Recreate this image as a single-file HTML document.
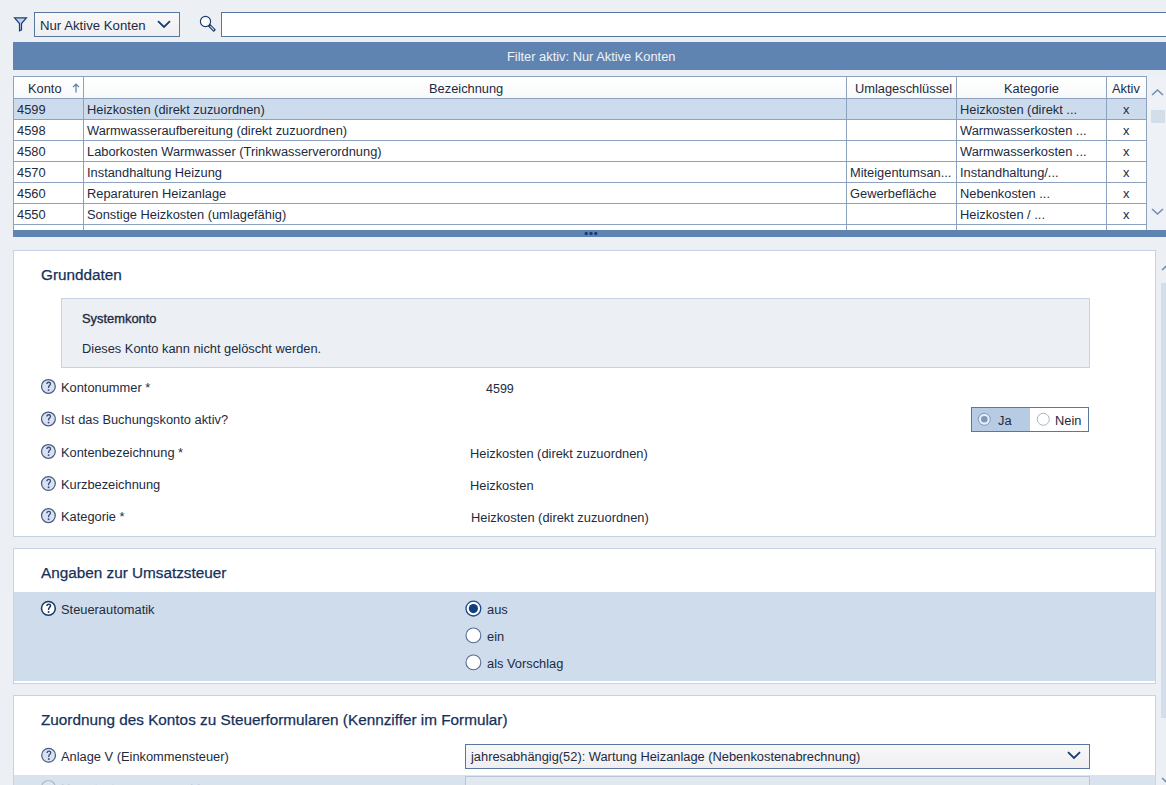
<!DOCTYPE html>
<html><head><meta charset="utf-8">
<style>
*{box-sizing:border-box;margin:0;padding:0}
html,body{width:1166px;height:785px;overflow:hidden;background:#ECEFF3;font-family:"Liberation Sans",sans-serif;color:#1D2B40;font-size:12.85px}
.a{position:absolute}
.t{position:absolute;white-space:nowrap;line-height:1}
/* top toolbar */
#combo{left:34px;top:12px;width:146px;height:25px;border:1px solid #58769E;background:linear-gradient(#F8F8F9,#EFEFF1)}
#search{left:221px;top:12px;width:960px;height:25px;border:1px solid #58769E;background:#fff}
#bar{left:13px;top:42px;width:1153px;height:28px;background:#5F84B2}
/* grid */
#grid{left:13px;top:76px;width:1134px;height:154px;background:#fff;border-top:1px solid #8DA2BF;border-left:1px solid #8DA2BF;overflow:hidden}
.hl{position:absolute;left:0;width:1134px;height:1px;background:#8DA2BF}
.vl{position:absolute;top:0;width:1px;height:154px;background:#8DA2BF}
#sel{position:absolute;left:0;top:22px;width:1133px;height:21px;background:#CDDCEC}
#hdr{position:absolute;left:0;top:0;width:1133px;height:22px;background:linear-gradient(#FFFFFF,#F7F8FA)}
#split{left:13px;top:230px;width:1153px;height:7px;background:#5F84B2}
#vs{left:1147px;top:76px;width:19px;height:154px;background:#EEF1F5}
/* panels */
.panel{position:absolute;left:13px;width:1143px;background:#fff;border:1px solid #C6D3E2}
.h{font-size:15.3px;color:#16305A;-webkit-text-stroke:0.25px #16305A}
.q{position:absolute;width:15px;height:15px}
.hi{position:absolute;left:1px;background:#CEDCEB}
</style></head><body>

<!-- toolbar -->
<svg class="a" style="left:13px;top:16px" width="15" height="16" viewBox="0 0 15 16">
  <path d="M1.6 1.9 H13.4 L8.5 7.5 V13.9 L6.5 14.8 V7.5 Z" fill="#C3D2EC" stroke="#1B3F74" stroke-width="1.2" stroke-linejoin="miter"/>
</svg>
<div id="combo" class="a"></div>
<div class="t" style="left:40px;top:19px;font-size:13.2px">Nur Aktive Konten</div>
<svg class="a" style="left:157px;top:20px" width="14" height="9" viewBox="0 0 14 9"><path d="M1 1.2 L7 7 L13 1.2" fill="none" stroke="#173C72" stroke-width="1.8"/></svg>
<svg class="a" style="left:199px;top:15px" width="18" height="18" viewBox="0 0 18 18">
  <circle cx="6.5" cy="6.5" r="5.1" fill="#fff" stroke="#1B3A66" stroke-width="1.15"/>
  <path d="M10.1 10.1 L15.8 15.8" stroke="#1B3A66" stroke-width="3.2"/>
  <path d="M11.2 11.2 L15 15" stroke="#C9D7EA" stroke-width="1.1"/>
</svg>
<div id="search" class="a"></div>
<div id="bar" class="a"></div>
<div class="t" style="left:507px;top:51px;color:#EEF3F9">Filter aktiv: Nur Aktive Konten</div>

<!-- grid -->
<div id="grid" class="a">
  <div id="hdr"></div>
  <div id="sel"></div>
  <div class="hl" style="top:21px"></div>
  <div class="hl" style="top:42px"></div>
  <div class="hl" style="top:63px"></div>
  <div class="hl" style="top:84px"></div>
  <div class="hl" style="top:105px"></div>
  <div class="hl" style="top:126px"></div>
  <div class="hl" style="top:147px"></div>
  <div class="vl" style="left:69px"></div>
  <div class="vl" style="left:832px"></div>
  <div class="vl" style="left:942px"></div>
  <div class="vl" style="left:1092px"></div>
  <div class="vl" style="left:1132px"></div>
</div>
<div id="vs" class="a"></div>
<svg class="a" style="left:1151px;top:88px" width="13" height="9" viewBox="0 0 13 9"><path d="M1 7 L6.5 2 L12 7" fill="none" stroke="#6F8DB6" stroke-width="1.5"/></svg>
<div class="a" style="left:1151px;top:110px;width:14px;height:13px;background:#D3DEEB"></div>
<svg class="a" style="left:1151px;top:207px" width="13" height="9" viewBox="0 0 13 9"><path d="M1 2 L6.5 7 L12 2" fill="none" stroke="#6F8DB6" stroke-width="1.5"/></svg>

<!-- header texts -->
<div class="t" style="left:28px;top:83px">Konto</div>
<svg class="a" style="left:72px;top:83px" width="8" height="10" viewBox="0 0 8 10"><path d="M4 9.5 V1.2 M1 4.2 L4 1.2 L7 4.2" fill="none" stroke="#5C7AA5" stroke-width="1.2"/></svg>
<div class="t" style="left:429px;top:83px">Bezeichnung</div>
<div class="t" style="left:855px;top:83px">Umlageschlüssel</div>
<div class="t" style="left:1004px;top:83px">Kategorie</div>
<div class="t" style="left:1112px;top:83px">Aktiv</div>

<!-- rows -->
<div id="rows">
<div class="t" style="left:17px;top:104px">4599</div><div class="t" style="left:87px;top:104px">Heizkosten (direkt zuzuordnen)</div><div class="t" style="left:960px;top:104px">Heizkosten (direkt ...</div><div class="t" style="left:1123px;top:104px">x</div>
<div class="t" style="left:17px;top:125px">4598</div><div class="t" style="left:87px;top:125px">Warmwasseraufbereitung (direkt zuzuordnen)</div><div class="t" style="left:960px;top:125px">Warmwasserkosten ...</div><div class="t" style="left:1123px;top:125px">x</div>
<div class="t" style="left:17px;top:146px">4580</div><div class="t" style="left:87px;top:146px">Laborkosten Warmwasser (Trinkwasserverordnung)</div><div class="t" style="left:960px;top:146px">Warmwasserkosten ...</div><div class="t" style="left:1123px;top:146px">x</div>
<div class="t" style="left:17px;top:167px">4570</div><div class="t" style="left:87px;top:167px">Instandhaltung Heizung</div><div class="t" style="left:850px;top:167px">Miteigentumsan...</div><div class="t" style="left:960px;top:167px">Instandhaltung/...</div><div class="t" style="left:1123px;top:167px">x</div>
<div class="t" style="left:17px;top:188px">4560</div><div class="t" style="left:87px;top:188px">Reparaturen Heizanlage</div><div class="t" style="left:850px;top:188px">Gewerbefläche</div><div class="t" style="left:960px;top:188px">Nebenkosten ...</div><div class="t" style="left:1123px;top:188px">x</div>
<div class="t" style="left:17px;top:209px">4550</div><div class="t" style="left:87px;top:209px">Sonstige Heizkosten (umlagefähig)</div><div class="t" style="left:960px;top:209px">Heizkosten / ...</div><div class="t" style="left:1123px;top:209px">x</div>
</div>
<div id="split" class="a"></div>
<svg class="a" style="left:584px;top:231px" width="14" height="5" viewBox="0 0 14 5"><circle cx="2.2" cy="2.5" r="1.7" fill="#113F7E"/><circle cx="7" cy="2.5" r="1.7" fill="#113F7E"/><circle cx="11.8" cy="2.5" r="1.7" fill="#113F7E"/></svg>

<!-- right scrollbar of details -->
<svg class="a" style="left:1161px;top:263px" width="5" height="9" viewBox="0 0 5 9"><path d="M1 7 L6.5 2 L12 7" fill="none" stroke="#6F8DB6" stroke-width="1.5"/></svg><svg class="a" style="left:1161px;top:776px" width="5" height="9" viewBox="0 0 5 9"><path d="M1 2 L6.5 7 L12 2" fill="none" stroke="#6F8DB6" stroke-width="1.5"/></svg>
<div class="a" style="left:1161px;top:283px;width:5px;height:435px;background:#D3DEEB"></div>

<!-- Grunddaten panel -->
<div class="panel" style="top:250px;height:287px"></div>
<div class="t h" style="left:41px;top:267px">Grunddaten</div>
<div class="a" style="left:61px;top:298px;width:1029px;height:70px;background:#ECF0F5;border:1px solid #C6D3E2"></div>
<div class="t" style="left:82px;top:313px;font-size:12.9px;-webkit-text-stroke:0.35px #1D2B40">Systemkonto</div>
<div class="t" style="left:82px;top:343px">Dieses Konto kann nicht gelöscht werden.</div>

<div class="t" style="left:61px;top:382px">Kontonummer *</div>
<div class="t" style="left:486px;top:383px;font-size:12.5px">4599</div>
<div class="t" style="left:61px;top:414px">Ist das Buchungskonto aktiv?</div>
<div class="t" style="left:61px;top:447px">Kontenbezeichnung *</div>
<div class="t" style="left:470px;top:448px">Heizkosten (direkt zuzuordnen)</div>
<div class="t" style="left:61px;top:479px">Kurzbezeichnung</div>
<div class="t" style="left:470px;top:480px">Heizkosten</div>
<div class="t" style="left:61px;top:511px">Kategorie *</div>
<div class="t" style="left:471px;top:512px">Heizkosten (direkt zuzuordnen)</div>

<!-- Ja/Nein -->
<div class="a" style="left:971px;top:407px;width:118px;height:25px;border:1px solid #5A779F;background:#fff"></div>
<div class="a" style="left:972px;top:408px;width:58px;height:23px;background:#B7CBE5"></div>
<svg class="a" style="left:977px;top:412px" width="15" height="15" viewBox="0 0 15 15"><circle cx="7.3" cy="7.3" r="6" fill="#E4ECF6" stroke="#7F97B8" stroke-width="1"/><circle cx="7.3" cy="7.3" r="3.3" fill="#7F97B8"/></svg>
<div class="t" style="left:998px;top:415px">Ja</div>
<svg class="a" style="left:1036px;top:412px" width="15" height="15" viewBox="0 0 15 15"><circle cx="7.3" cy="7.3" r="6" fill="#fff" stroke="#A9B6C8" stroke-width="1"/></svg>
<div class="t" style="left:1055px;top:415px">Nein</div>

<!-- Umsatzsteuer panel -->
<div class="panel" style="top:548px;height:136px"></div>
<div class="hi" style="left:14px;top:592px;width:1141px;height:89px"></div>
<div class="t h" style="left:41px;top:565px">Angaben zur Umsatzsteuer</div>
<div class="t" style="left:61px;top:604px">Steuerautomatik</div>
<svg class="a" style="left:465px;top:600px" width="17" height="17" viewBox="0 0 17 17"><circle cx="8.4" cy="8.6" r="7.4" fill="#fff" stroke="#1D4A87" stroke-width="1.3"/><circle cx="8.4" cy="8.6" r="4.6" fill="#0F3F80"/></svg>
<div class="t" style="left:487px;top:604px">aus</div>
<svg class="a" style="left:465px;top:627px" width="17" height="17" viewBox="0 0 17 17"><circle cx="8.4" cy="8.4" r="7.4" fill="#fff" stroke="#586F91" stroke-width="1.1"/></svg>
<div class="t" style="left:487px;top:631px">ein</div>
<svg class="a" style="left:465px;top:654px" width="17" height="17" viewBox="0 0 17 17"><circle cx="8.4" cy="8.4" r="7.4" fill="#fff" stroke="#586F91" stroke-width="1.1"/></svg>
<div class="t" style="left:487px;top:658px">als Vorschlag</div>

<!-- Zuordnung panel -->
<div class="panel" style="top:695px;height:100px"></div>
<div class="t h" style="left:41px;top:712px">Zuordnung des Kontos zu Steuerformularen (Kennziffer im Formular)</div>
<div class="t" style="left:61px;top:751px">Anlage V (Einkommensteuer)</div>
<div class="a" style="left:465px;top:744px;width:625px;height:25px;border:1px solid #58769E;background:linear-gradient(#F8F8F9,#EFEFF1)"></div>
<div class="t" style="left:471px;top:751px">jahresabhängig(52): Wartung Heizanlage (Nebenkostenabrechnung)</div>
<svg class="a" style="left:1067px;top:751px" width="14" height="9" viewBox="0 0 14 9"><path d="M1 1.2 L7 7 L13 1.2" fill="none" stroke="#173C72" stroke-width="1.8"/></svg>
<div class="hi" style="left:14px;top:775px;width:1141px;height:10px;background:#D9E3EE"></div>
<div class="a" style="left:465px;top:776px;width:625px;height:10px;border:1px solid #B8C6D8;background:#E2E8F0"></div><svg class="a" style="left:39px;top:777px" width="18" height="8" viewBox="0 0 18 8"><circle cx="9.4" cy="10.4" r="6.9" fill="#DCE4EF" stroke="#AEBBCD" stroke-width="1.2"/></svg><div class="t" style="left:61px;top:783px;color:#C0CAD8">Umsatzsteuervoranmeldung</div><div class="t" style="left:471px;top:784px;color:#C0CAD8">jahresabhängig(28): Wartung</div>

<div id="qs"><svg class="a" style="left:39px;top:377px" width="18" height="18" viewBox="0 0 18 18"><circle cx="9.40" cy="9.40" r="6.9" fill="#D8E2F3" stroke="#4A5B80" stroke-width="1.25"/><path d="M7.90 7.10 C7.90 5.90 8.70 5.20 9.70 5.20 C10.80 5.20 11.50 5.90 11.50 6.90 C11.50 7.80 10.90 8.20 10.40 8.60 C9.80 9.00 9.60 9.40 9.60 10.30 L9.60 11.10" fill="none" stroke="#3D4E72" stroke-width="1.35"/><circle cx="9.60" cy="13.10" r="0.95" fill="#3D4E72"/></svg><svg class="a" style="left:39px;top:409px" width="18" height="18" viewBox="0 0 18 18"><circle cx="9.40" cy="9.90" r="6.9" fill="#D8E2F3" stroke="#4A5B80" stroke-width="1.25"/><path d="M7.90 7.60 C7.90 6.40 8.70 5.70 9.70 5.70 C10.80 5.70 11.50 6.40 11.50 7.40 C11.50 8.30 10.90 8.70 10.40 9.10 C9.80 9.50 9.60 9.90 9.60 10.80 L9.60 11.60" fill="none" stroke="#3D4E72" stroke-width="1.35"/><circle cx="9.60" cy="13.60" r="0.95" fill="#3D4E72"/></svg><svg class="a" style="left:39px;top:442px" width="18" height="18" viewBox="0 0 18 18"><circle cx="9.40" cy="9.40" r="6.9" fill="#D8E2F3" stroke="#4A5B80" stroke-width="1.25"/><path d="M7.90 7.10 C7.90 5.90 8.70 5.20 9.70 5.20 C10.80 5.20 11.50 5.90 11.50 6.90 C11.50 7.80 10.90 8.20 10.40 8.60 C9.80 9.00 9.60 9.40 9.60 10.30 L9.60 11.10" fill="none" stroke="#3D4E72" stroke-width="1.35"/><circle cx="9.60" cy="13.10" r="0.95" fill="#3D4E72"/></svg><svg class="a" style="left:39px;top:474px" width="18" height="18" viewBox="0 0 18 18"><circle cx="9.40" cy="9.50" r="6.9" fill="#D8E2F3" stroke="#4A5B80" stroke-width="1.25"/><path d="M7.90 7.20 C7.90 6.00 8.70 5.30 9.70 5.30 C10.80 5.30 11.50 6.00 11.50 7.00 C11.50 7.90 10.90 8.30 10.40 8.70 C9.80 9.10 9.60 9.50 9.60 10.40 L9.60 11.20" fill="none" stroke="#3D4E72" stroke-width="1.35"/><circle cx="9.60" cy="13.20" r="0.95" fill="#3D4E72"/></svg><svg class="a" style="left:39px;top:506px" width="18" height="18" viewBox="0 0 18 18"><circle cx="9.40" cy="9.60" r="6.9" fill="#D8E2F3" stroke="#4A5B80" stroke-width="1.25"/><path d="M7.90 7.30 C7.90 6.10 8.70 5.40 9.70 5.40 C10.80 5.40 11.50 6.10 11.50 7.10 C11.50 8.00 10.90 8.40 10.40 8.80 C9.80 9.20 9.60 9.60 9.60 10.50 L9.60 11.30" fill="none" stroke="#3D4E72" stroke-width="1.35"/><circle cx="9.60" cy="13.30" r="0.95" fill="#3D4E72"/></svg><svg class="a" style="left:39px;top:599px" width="18" height="18" viewBox="0 0 18 18"><circle cx="9.40" cy="9.35" r="6.9" fill="#FFFFFF" stroke="#1A3A66" stroke-width="1.55"/><path d="M7.90 7.05 C7.90 5.85 8.70 5.15 9.70 5.15 C10.80 5.15 11.50 5.85 11.50 6.85 C11.50 7.75 10.90 8.15 10.40 8.55 C9.80 8.95 9.60 9.35 9.60 10.25 L9.60 11.05" fill="none" stroke="#1A3A66" stroke-width="1.5"/><circle cx="9.60" cy="13.05" r="0.95" fill="#1A3A66"/></svg><svg class="a" style="left:39px;top:746px" width="18" height="18" viewBox="0 0 18 18"><circle cx="9.60" cy="9.30" r="6.9" fill="#D8E2F3" stroke="#4A5B80" stroke-width="1.25"/><path d="M8.10 7.00 C8.10 5.80 8.90 5.10 9.90 5.10 C11.00 5.10 11.70 5.80 11.70 6.80 C11.70 7.70 11.10 8.10 10.60 8.50 C10.00 8.90 9.80 9.30 9.80 10.20 L9.80 11.00" fill="none" stroke="#3D4E72" stroke-width="1.35"/><circle cx="9.80" cy="13.00" r="0.95" fill="#3D4E72"/></svg></div>
</body></html>
